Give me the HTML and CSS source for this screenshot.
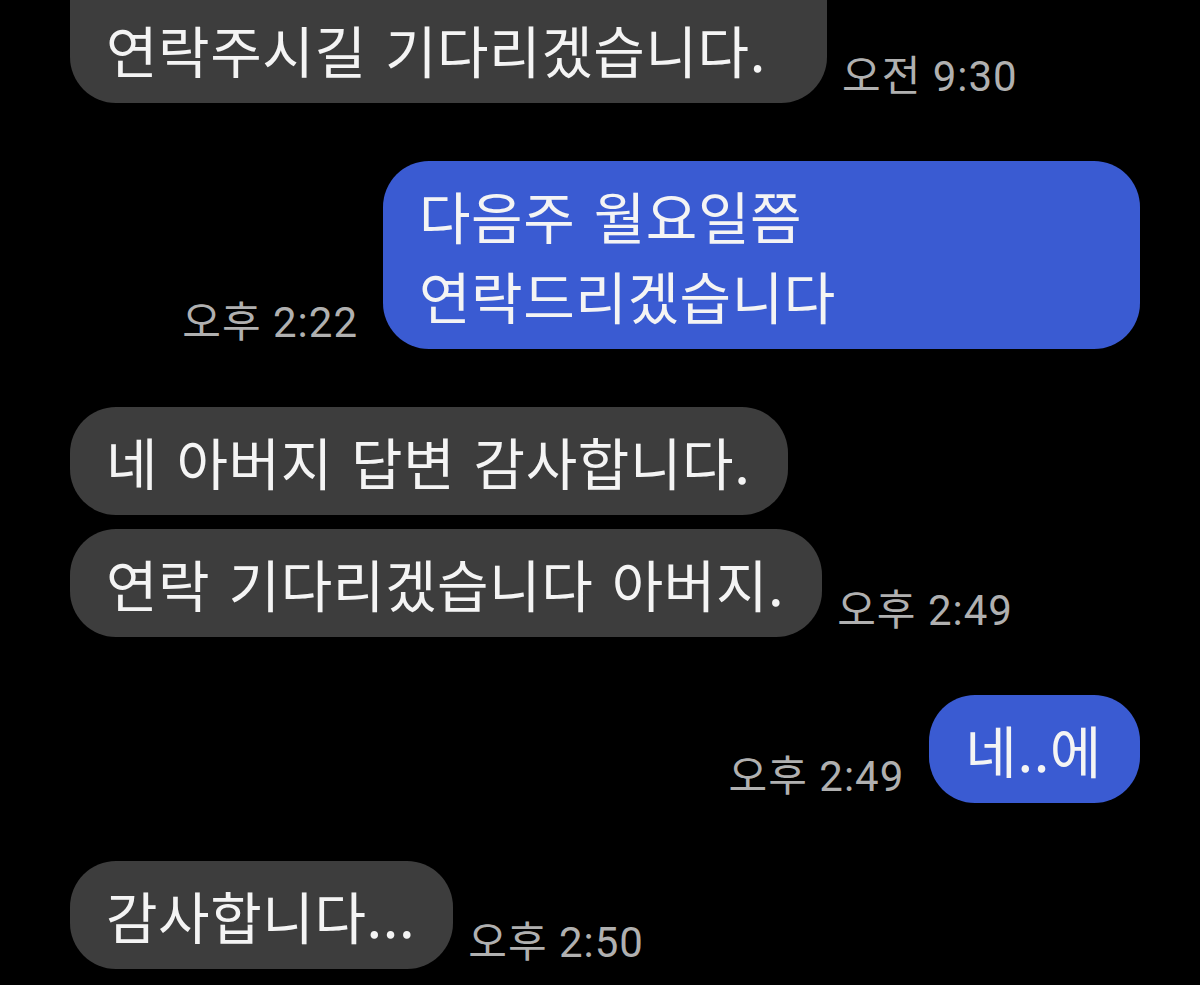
FILE: index.html
```html
<!DOCTYPE html>
<html lang="ko">
<head>
<meta charset="utf-8">
<title>대화</title>
<link rel="stylesheet" href="styles.css">
</head>
<body>
  <main class="chat">
    <div class="row in">
      <div class="bubble gray wide cut">연락주시길 기다리겠습니다.</div>
      <span class="time">오전 9:30</span>
    </div>

    <div class="row out">
      <span class="time">오후 2:22</span>
      <div class="bubble blue">다음주 월요일쯤 연락드리겠습니다</div>
    </div>

    <div class="row in">
      <div class="bubble gray">네 아버지 답변 감사합니다.</div>
    </div>
    <div class="row in grouped">
      <div class="bubble gray">연락 기다리겠습니다 아버지.</div>
      <span class="time">오후 2:49</span>
    </div>

    <div class="row out">
      <span class="time">오후 2:49</span>
      <div class="bubble blue">네..에</div>
    </div>

    <div class="row in">
      <div class="bubble gray">감사합니다...</div>
      <span class="time">오후 2:50</span>
    </div>
  </main>
</body>
</html>
```

FILE: styles.css
```css
html, body {
  margin: 0;
  padding: 0;
  background: #000;
  overflow: hidden;
}

body {
  width: 1200px;
  height: 985px;
}

/* message list, scrolled so the first bubble runs off the top */
.chat {
  display: flex;
  flex-direction: column;
  padding: 0 60px 0 70px;
  margin-top: -5px;
  font-family: "Noto Sans CJK KR", "Noto Sans", sans-serif;
}

.row {
  display: flex;
  align-items: flex-end;
  gap: 15px;
  margin-top: 58px;
}

.row:first-child {
  margin-top: 0;
}

.row.grouped {
  margin-top: 14px;
}

.row.out {
  justify-content: flex-end;
  gap: 25px;
}

.bubble {
  box-sizing: border-box;
  max-width: 757px;
  padding: 14px 38px 14px 36px;
  border-radius: 46px;
  color: #f4f4f4;
  font-size: 56px;
  line-height: 80px;
  letter-spacing: 0.6px;
  word-spacing: 2px;
  word-break: keep-all;
}

.bubble.gray {
  background: #3d3d3d;
}

.bubble.blue {
  background: #3a5bd2;
}

/* bubble whose width was set by an earlier, wrapped line */
.bubble.wide {
  width: 757px;
}

.bubble.cut {
  border-top-left-radius: 0;
  border-top-right-radius: 0;
}

.time {
  flex: none;
  color: #b0b0b0;
  font-family: Roboto, "Noto Sans CJK KR", sans-serif;
  font-size: 42px;
  line-height: 42px;
  letter-spacing: 1px;
  white-space: nowrap;
  margin-bottom: 5px;
}
```
